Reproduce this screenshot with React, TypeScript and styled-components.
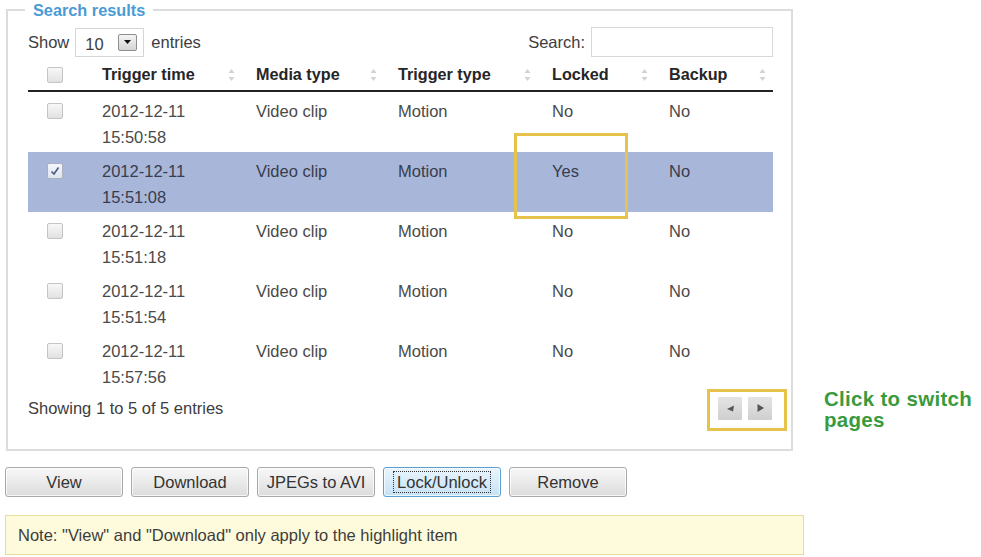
import React from "react";
import styled, { createGlobalStyle } from "styled-components";

const Global = createGlobalStyle`
  html, body { margin: 0; padding: 0; background: #fff; }
  body {
    font-family: "Liberation Sans", Arial, sans-serif;
    font-size: 16.5px;
    color: #3d3d3d;
  }
`;

const Page = styled.div`
  width: 981px;
  height: 557px;
  overflow: hidden;
  padding-left: 5px;
  box-sizing: border-box;
`;

const TopRow = styled.div`
  display: flex;
  align-items: flex-end;
`;

const Fieldset = styled.fieldset`
  margin: 0 0 0 1px;
  width: 787px;
  min-width: 0;
  box-sizing: border-box;
  border: 2px solid #dcdcdc;
  padding: 7px 18px 25px 20px;
`;

const Legend = styled.legend`
  margin-left: -3px;
  padding: 0 8px;
  font-size: 16.3px;
  line-height: 20px;
  font-weight: bold;
  color: #4a9bd5;
`;

const Controls = styled.div`
  display: flex;
  justify-content: space-between;
  align-items: center;
  height: 30px;
`;

const Label = styled.label`
  display: flex;
  align-items: center;
  gap: 6px;
  color: #3d3d3d;
`;

const SelectBox = styled.div`
  position: relative;
  width: 69px;
  height: 29px;
  box-sizing: border-box;
  border: 1px solid #d6d6d6;
  background: #fff;
  display: flex;
  align-items: center;
  padding: 4px 0 0 9px;
  margin-right: 1px;
`;

const SelectArrow = styled.span`
  position: absolute;
  right: 6px;
  top: 5px;
  width: 19px;
  height: 17px;
  box-sizing: border-box;
  border: 1px solid #8e8e8e;
  border-radius: 2px;
  background: linear-gradient(#f4f4f4, #d4d4d4);
  display: flex;
  align-items: center;
  justify-content: center;
`;

const SearchInput = styled.div`
  width: 182px;
  height: 30px;
  box-sizing: border-box;
  border: 1px solid #d8d8d8;
  background: #fff;
`;

const Grid = styled.div`
  display: grid;
  grid-template-columns: 60px 154px 142px 154px 117px 118px;
`;

const HeadRow = styled(Grid)`
  height: 35px;
  border-bottom: 2px solid #222;
  box-sizing: border-box;
  align-items: center;
  padding-top: 2px;
`;

const HeadCell = styled.div`
  display: flex;
  justify-content: space-between;
  align-items: center;
  padding: 0 7px 0 14px;
  font-weight: bold;
  font-size: 16.2px;
  color: #262626;
`;

const CheckCell = styled.div<{ $head?: boolean }>`
  padding-left: 19px;
  padding-top: ${(p) => (p.$head ? "0" : "11px")};
`;

const Row = styled(Grid)<{ $selected?: boolean }>`
  height: 60px;
  background: ${(p) => (p.$selected ? "#a8b7d9" : "transparent")};
  color: ${(p) => (p.$selected ? "#383c4c" : "#4a4a4a")};
`;

const Cell = styled.div`
  position: relative;
  padding: 6px 0 0 14px;
  line-height: 26px;
`;

const Box = styled.span<{ $checked?: boolean }>`
  display: flex;
  align-items: center;
  justify-content: center;
  width: 16px;
  height: 16px;
  box-sizing: border-box;
  border: 1px solid ${(p) => (p.$checked ? "#aab0c0" : "#c4c4c4")};
  border-radius: 2px;
  background: ${(p) =>
    p.$checked
      ? "linear-gradient(#f4f6fb, #dfe4ef)"
      : "linear-gradient(#f7f7f7, #e2e2e2)"};
`;

const Highlight = styled.div`
  position: absolute;
  border: 3px solid #e6c44c;
  box-sizing: border-box;
  pointer-events: none;
`;

const YesMark = styled(Highlight)`
  left: -24px;
  top: -19px;
  width: 114px;
  height: 86px;
`;

const Footer = styled.div`
  display: flex;
  justify-content: space-between;
  align-items: center;
  height: 32px;
  color: #3d3d3d;
`;

const Pager = styled.div`
  position: relative;
  display: flex;
  gap: 6px;
  margin-right: 1px;
`;

const PageMark = styled(Highlight)`
  left: -11px;
  top: -8px;
  width: 80px;
  height: 42px;
`;

const PageButton = styled.span`
  width: 24px;
  height: 23px;
  display: flex;
  align-items: center;
  justify-content: center;
  background: linear-gradient(#e4e4e4, #cfcfcf);
  border-radius: 1px;
`;

const Aside = styled.div`
  margin: 0 0 21px 31px;
  color: #3a9b3e;
  font-weight: bold;
  font-size: 20.5px;
  line-height: 21px;
  letter-spacing: 0.3px;
`;

const Buttons = styled.div`
  display: flex;
  gap: 8px;
  margin-top: 16px;
`;

const Button = styled.button<{ $focus?: boolean }>`
  width: 118px;
  height: 30px;
  padding: 0;
  font-family: inherit;
  font-size: 16.5px;
  color: #333;
  border-radius: 3px;
  border: 1px solid ${(p) => (p.$focus ? "#5f9fd0" : "#a9a9a9")};
  background: ${(p) =>
    p.$focus
      ? "linear-gradient(#eaf5fd, #c6e2f6)"
      : "linear-gradient(#f8f8f8, #dcdcdc)"};
  box-shadow: inset 0 0 0 1px rgba(255, 255, 255, 0.7);
`;

const FocusText = styled.span`
  outline: 1px dotted #333;
  outline-offset: 1px;
  padding: 0 2px;
`;

const Note = styled.div`
  margin-top: 18px;
  width: 799px;
  height: 40px;
  box-sizing: border-box;
  border: 1px solid #e6dc9c;
  background: #fdfbdc;
  display: flex;
  align-items: center;
  padding-left: 12px;
  color: #3d3d3d;
`;

const SortIcon = () => (
  <svg width="7" height="14" viewBox="0 0 7 14">
    <path d="M3.5 1 L6.5 5 H0.5 Z" fill="#d2d2d2" />
    <path d="M3.5 13 L6.5 9 H0.5 Z" fill="#d2d2d2" />
  </svg>
);

const Check = () => (
  <svg width="10" height="10" viewBox="0 0 10 10">
    <path d="M1.5 5.5 L4 8 L8.5 1.5" fill="none" stroke="#4a5a86" strokeWidth="1.6" />
  </svg>
);

type Item = { date: string; time: string; locked: string; selected?: boolean };

const items: Item[] = [
  { date: "2012-12-11", time: "15:50:58", locked: "No" },
  { date: "2012-12-11", time: "15:51:08", locked: "Yes", selected: true },
  { date: "2012-12-11", time: "15:51:18", locked: "No" },
  { date: "2012-12-11", time: "15:51:54", locked: "No" },
  { date: "2012-12-11", time: "15:57:56", locked: "No" },
];

const headers = ["Trigger time", "Media type", "Trigger type", "Locked", "Backup"];

export default function App() {
  return (
    <Page>
      <Global />
      <TopRow>
        <Fieldset>
          <Legend>Search results</Legend>
          <Controls>
            <Label>
              Show
              <SelectBox>
                10
                <SelectArrow>
                  <svg width="7" height="4" viewBox="0 0 7 4">
                    <path d="M0 0 H7 L3.5 4 Z" fill="#111" />
                  </svg>
                </SelectArrow>
              </SelectBox>
              entries
            </Label>
            <Label>
              Search:
              <SearchInput />
            </Label>
          </Controls>
          <HeadRow>
            <CheckCell $head>
              <Box />
            </CheckCell>
            {headers.map((h) => (
              <HeadCell key={h}>
                {h}
                <SortIcon />
              </HeadCell>
            ))}
          </HeadRow>
          {items.map((it) => (
            <Row key={it.time} $selected={it.selected}>
              <CheckCell>
                <Box $checked={it.selected}>{it.selected && <Check />}</Box>
              </CheckCell>
              <Cell>
                {it.date}
                <br />
                {it.time}
              </Cell>
              <Cell>Video clip</Cell>
              <Cell>Motion</Cell>
              <Cell>
                {it.locked}
                {it.selected && <YesMark />}
              </Cell>
              <Cell>No</Cell>
            </Row>
          ))}
          <Footer>
            <span>Showing 1 to 5 of 5 entries</span>
            <Pager>
              <PageMark />
              <PageButton>
                <svg width="7" height="7" viewBox="0 0 7 7">
                  <path d="M0 4 L7 0.5 L6 6.5 Z" fill="#555" />
                </svg>
              </PageButton>
              <PageButton>
                <svg width="7" height="8" viewBox="0 0 7 8">
                  <path d="M0.5 0 L7 4 L0.5 8 Z" fill="#555" />
                </svg>
              </PageButton>
            </Pager>
          </Footer>
        </Fieldset>
        <Aside>
          Click to switch
          <br />
          pages
        </Aside>
      </TopRow>
      <Buttons>
        <Button>View</Button>
        <Button>Download</Button>
        <Button>JPEGs to AVI</Button>
        <Button $focus>
          <FocusText>Lock/Unlock</FocusText>
        </Button>
        <Button>Remove</Button>
      </Buttons>
      <Note>Note: "View" and "Download" only apply to the highlight item</Note>
    </Page>
  );
}
